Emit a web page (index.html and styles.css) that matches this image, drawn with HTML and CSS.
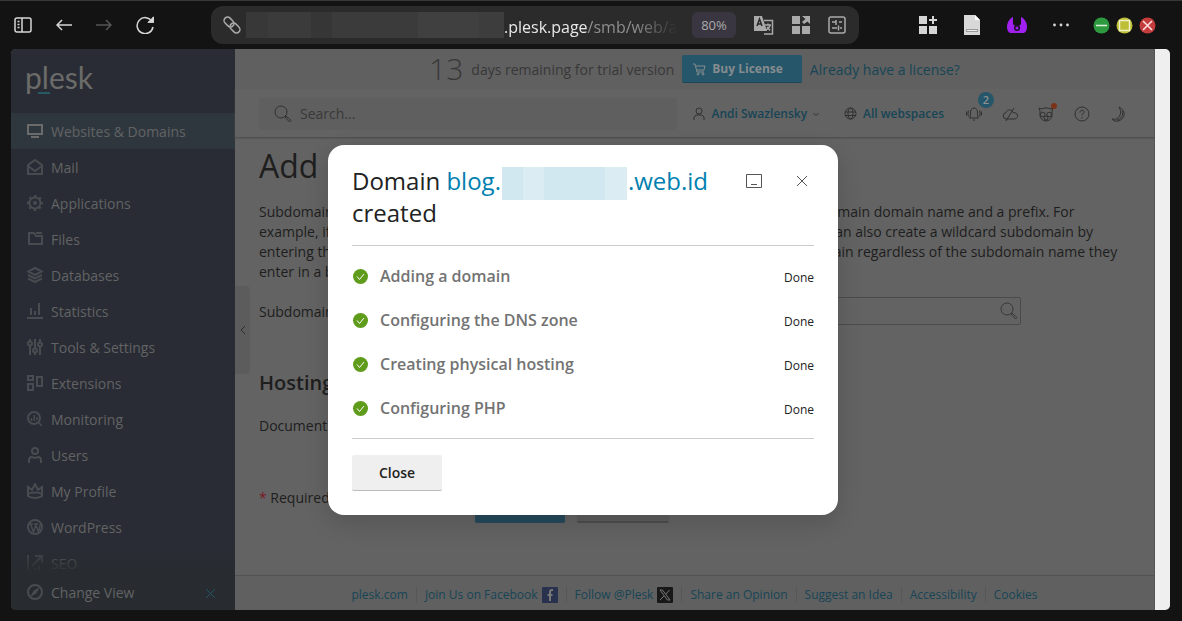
FILE: index.html
```
<!DOCTYPE html>
<html lang="en">

<head>
    <meta charset="UTF-8">
    <meta name="viewport" content="width=device-width, initial-scale=1.0">
    <title>Add a Subdomain - Plesk</title>
    <link rel="stylesheet" href="styles.css">
</head>
<body>
    <header class="toolbar">
        <div class="toolbar-nav">
            <button class="tool" aria-label="Sidebar">
                <svg width="18" height="18" viewBox="0 0 18 18"><rect x="1" y="2" width="16" height="14" rx="2"/><path d="M8 2v14M3.500 5.500h2M3.500 8.500h2M3.500 11.500h2"/></svg>
            </button>
            <button class="tool" aria-label="Back">
                <svg width="16" height="16" viewBox="0 0 16 16"><path d="M16 8H1M6 3L1 8l5 5"/></svg>
            </button>
            <button class="tool dim" aria-label="Forward">
                <svg width="16" height="16" viewBox="0 0 16 16"><path d="M0 8h15M10 3l5 5-5 5"/></svg>
            </button>
            <button class="tool" aria-label="Reload">
                <svg width="18" height="18" viewBox="0 0 18 18"><path d="M16 5.500A8 8 0 1 0 17 11M17.300 1v5h-5"/><path d="M17 2v4h-4z" fill="currentColor"/></svg>
            </button>
        </div>
        <div class="address">
            <svg class="link-icon" width="18" height="18" viewBox="0 0 18 18"><rect x="0.500" y="2.500" width="11" height="7" rx="3.500" transform="rotate(45 6 6)"/><rect x="6.500" y="8.500" width="11" height="7" rx="3.500" transform="rotate(45 12 12)"/></svg>
            <div class="url"><span class="url-mask"></span><b>.plesk.page</b>/smb/web/ad</div>
            <button class="zoom">80%</button>
            <button class="tool" aria-label="Translate">
                <svg width="20" height="20" viewBox="0 0 20 20"><path d="M10 5.500h8.500v13.500H10M11 10h6M14 8.500V10M16 10c-.5 3-2 4-4 5M13 12l3 3.500"/><path d="M0 1h8l5 15H0z" fill="currentColor" stroke="none"/><path d="M3 11l2.500-7L8 11M4 9h3" stroke="#2b2b2b"/></svg>
            </button>
            <button class="tool" aria-label="Apps">
                <svg class="solid" width="18" height="18" viewBox="0 0 18 18"><path d="M0 0h8v8H0zM0 10h8v8H0zM10 10h8v8h-8zM10 0h8v8l-2.500-2.500L12 8l-2-2 3.500-3z"/></svg>
            </button>
            <button class="tool" aria-label="Page settings">
                <svg width="18" height="18" viewBox="0 0 18 18"><rect x="1" y="1" width="16" height="16" rx="2"/><path d="M4 6h4M11 6h3M8 4v5M4 12h5M12 12h2M10.500 9.500v5"/></svg>
            </button>
        </div>
        <div class="toolbar-side">
            <div class="extensions">
                <button class="tool" aria-label="Extensions">
                    <svg class="solid" width="18" height="18" viewBox="0 0 18 18"><path d="M0 0h8v8H0zM0 10h8v8H0zM10 10h8v8h-8zM13 0h2v3h3v2h-3v3h-2V5h-3V3h3z"/></svg>
                </button>
                <button class="tool" aria-label="Document">
                    <svg class="solid" width="18" height="20" viewBox="0 0 18 20"><path d="M1 0h11l5 5v15H1z" fill="#d8d8d8"/><path d="M12 0l5 5h-5z" fill="#fff"/><path d="M3 14h12v3H3z" fill="#999"/><path d="M4 15h10v1H4z" fill="#eee"/></svg>
                </button>
                <button class="tool" aria-label="Reader">
                    <svg class="solid" width="20" height="18" viewBox="0 0 20 18"><path d="M6 1v7l2 2a3 3 0 0 1 4 0l2-2V1c4 2 6 6 6 10 0 3-1 5-3 6H3c-2-1-3-3-3-6C0 7 2 3 6 1z" fill="#a020f0"/><circle cx="10" cy="12" r="3" fill="#17101d"/><circle cx="10" cy="12" r="1.500" fill="#a020f0"/></svg>
                </button>
                <button class="tool" aria-label="More">
                    <svg class="solid" width="16" height="16" viewBox="0 0 16 16"><circle cx="1.500" cy="8" r="1.400"/><circle cx="8" cy="8" r="1.400"/><circle cx="14.500" cy="8" r="1.400"/></svg>
                </button>
            </div>
            <div class="window-buttons">
                <button class="tool" aria-label="Minimize">
                    <svg width="17" height="17" viewBox="0 0 17 17"><circle cx="8.500" cy="8.500" r="8" fill="#2e9a40" stroke="none"/><path d="M3 8.500h11" stroke="#dff0d8"/></svg>
                </button>
                <button class="tool" aria-label="Maximize">
                    <svg width="17" height="17" viewBox="0 0 17 17"><circle cx="8.500" cy="8.500" r="8" fill="#bfbf36" stroke="none"/><rect x="3.500" y="3.500" width="10" height="10" stroke="#f0f0c8"/></svg>
                </button>
                <button class="tool" aria-label="Close window">
                    <svg width="17" height="17" viewBox="0 0 17 17"><circle cx="8.500" cy="8.500" r="8" fill="#c43c3c" stroke="none"/><path d="M4 4l9 9M13 4l-9 9" stroke="#ffe0e0"/></svg>
                </button>
            </div>
        </div>
    </header>

    <div class="viewport">
        <aside class="sidebar">
            <a class="logo" href="#" aria-label="plesk">plesk</a>
            <nav class="menu">
                <a class="current" href="#"><svg width="16" height="16" viewBox="0 0 16 16"><path d="M1 2h14v9H1zM4 14h8"/></svg>Websites &amp; Domains</a>
                <a href="#"><svg width="16" height="16" viewBox="0 0 16 16"><path d="M1 6l7-5 7 5v9H1zM1 7l7 5 7-5"/></svg>Mail</a>
                <a href="#"><svg width="16" height="16" viewBox="0 0 16 16"><circle cx="8" cy="8" r="5.500"/><circle cx="8" cy="8" r="7" stroke-dasharray="2.500 3" stroke-dashoffset="1.250"/><circle cx="8" cy="8" r="1"/></svg>Applications</a>
                <a href="#"><svg width="16" height="16" viewBox="0 0 16 16"><path d="M2 2h5l2 3h6v8H2zM9 2h6"/></svg>Files</a>
                <a href="#"><svg width="16" height="16" viewBox="0 0 16 16"><path d="M8 1l7 3.500L8 8 1 4.500zM1 8l7 3.500L15 8M1 11.500L8 15l7-3.500"/></svg>Databases</a>
                <a href="#"><svg width="16" height="16" viewBox="0 0 16 16"><path d="M0 15h16M4 12V5M8 12V8M12 12V0"/></svg>Statistics</a>
                <a href="#"><svg width="16" height="16" viewBox="0 0 16 16"><path d="M3 0v2M3 7v9M8 0v9M8 14v2M13 0v3M13 8v8"/><circle cx="3" cy="4.500" r="2"/><circle cx="8" cy="11.500" r="2"/><circle cx="13" cy="5.500" r="2"/></svg>Tools &amp; Settings</a>
                <a href="#"><svg width="16" height="16" viewBox="0 0 16 16"><path d="M1 1h5v4H1zM1 9h5v6H1zM10 2h5v9h-5z"/></svg>Extensions</a>
                <a href="#"><svg width="16" height="16" viewBox="0 0 16 16"><circle cx="7" cy="7" r="6"/><path d="M11 11l4 4M4.500 10V7M7.300 10V4M10 9V6" stroke-width="1.500"/></svg>Monitoring</a>
                <a href="#"><svg width="16" height="16" viewBox="0 0 16 16"><circle cx="8" cy="4" r="3"/><path d="M2 16v-3c0-2 1-3 3-3l3 1 3-1c2 0 3 1 3 3v3"/></svg>Users</a>
                <a href="#"><svg width="16" height="16" viewBox="0 0 16 16"><path d="M1 4l4 3 3-6 3 6 4-3v9c-3 2.500-11 2.500-14 0zM1 11c3-2 11-2 14 0"/></svg>My Profile</a>
                <a href="#"><svg width="16" height="16" viewBox="0 0 16 16"><circle cx="8" cy="8" r="7"/><path d="M2 5h4M3.500 5l3 8L8.500 7M7 5h4M8.500 5l3 8 2-8" stroke-width="1.500"/></svg>WordPress</a>
                <a href="#"><svg width="16" height="16" viewBox="0 0 16 16"><path d="M1 0v15h3M8 1h7v7M15 1L5 11M8 15v-2M12 15v-4"/></svg>SEO</a>
            </nav>
            <div class="change-view">
                <svg width="16" height="16" viewBox="0 0 16 16"><circle cx="8" cy="8" r="7"/><path d="M12 4l-3 5-5 3 3-5z" fill="currentColor" stroke-width="1"/></svg>
                <a href="#">Change View</a>
                <button class="change-close" aria-label="Dismiss"><svg width="11" height="11" viewBox="0 0 11 11"><path d="M1 1l9 9M10 1l-9 9"/></svg></button>
            </div>
        </aside>

        <div class="content">
            <button class="collapse" aria-label="Collapse menu"><svg width="6" height="10" viewBox="0 0 6 10"><path d="M5 1L1 5l4 4"/></svg></button>

            <div class="trial">
                <span class="trial-days">13</span>
                <span class="trial-text">days remaining for trial version</span>
                <button class="buy"><svg width="13" height="13" viewBox="0 0 13 13"><path d="M0 1h2l2 8h7M3 3h9l-1 4H4"/><circle cx="5" cy="11" r="1"/><circle cx="10" cy="11" r="1"/></svg>Buy License</button>
                <a href="#">Already have a license?</a>
            </div>

            <div class="topbar">
                <label class="search">
                    <svg width="18" height="18" viewBox="0 0 18 18"><circle cx="7" cy="7" r="6"/><path d="M11 12l1-1 5 4.500-1.500 1.500z"/></svg>
                    <input type="text" placeholder="Search..." aria-label="Search">
                </label>
                <a class="account" href="#">
                    <svg width="12" height="14" viewBox="0 0 12 14"><circle cx="6" cy="4" r="3"/><path d="M1 13v-3l2-2h6l2 2v3"/></svg>
                    Andi Swazlensky
                    <svg width="6" height="6" viewBox="0 0 6 6"><path d="M.5 2L3 4.500 5.500 2"/></svg>
                </a>
                <a class="webspaces" href="#">
                    <svg width="13" height="13" viewBox="0 0 13 13"><circle cx="6.500" cy="6.500" r="5.500"/><ellipse cx="6.500" cy="6.500" rx="2.500" ry="5.500"/><path d="M1 5h11M1 8.500h11"/></svg>
                    All webspaces
                </a>
                <div class="top-icons">
                    <button class="top-icon" aria-label="Notifications">
                        <svg width="16" height="16" viewBox="0 0 16 16"><path d="M3.500 12c1-1 1-2 1-6 0-2 1.500-4 3.500-4s3.500 2 3.500 4c0 4 0 5 1 6zM7 14h2M2.500 4.500c-.7 2-.7 4 0 6M13.500 4.500c.7 2 .7 4 0 6M.5 5.500v4M15.500 5.500v4"/></svg>
                        <span class="badge">2</span>
                    </button>
                    <button class="top-icon" aria-label="Cloud">
                        <svg width="16" height="16" viewBox="0 0 16 16"><path d="M4 13a3.300 3.300 0 0 1 0-6.500C5 3 10 3 11 6.500c6 0 6 6.500 1 6.500zM12 2L4 15"/></svg>
                    </button>
                    <button class="top-icon" aria-label="Advisor">
                        <svg width="16" height="16" viewBox="0 0 16 16"><path d="M2 5L1 2l3 1c2-1.500 6-1.500 8 0l3-1-1 3v5c-1 3-3 5-6 5s-5-2-6-5z"/><circle cx="4.800" cy="8.500" r="2.300"/><circle cx="11.200" cy="8.500" r="2.300"/><circle cx="8" cy="12" r="2"/></svg>
                        <span class="dot"></span>
                    </button>
                    <button class="top-icon" aria-label="Help">
                        <svg width="16" height="16" viewBox="0 0 16 16"><circle cx="8" cy="8" r="7"/><path d="M6 6.500c0-3 4-3 4-.5 0 1.500-2 1.500-2 3.500M8 11v1.500"/></svg>
                    </button>
                    <button class="top-icon" aria-label="Dark mode">
                        <svg width="16" height="16" viewBox="0 0 16 16"><path d="M9 1c7 3 7 12-1 14-3 .5-5-.5-6-2 7 2 11-6 7-12zM12 5c2 4-1 8-5 9"/></svg>
                    </button>
                </div>
            </div>

            <main class="page">
                <h1>Add a Subdomain</h1>
                <p class="intro">
                    Subdomains are internet addresses for different sections of your website. They use your main domain name and a prefix. For<br>
                    example, if your domain is domain.com, a subdomain might be store.domain.com. You can also create a wildcard subdomain by<br>
                    entering the asterisk symbol ('*'). All website visitors will be redirected to your main domain regardless of the subdomain name they<br>
                    enter in a browser.
                </p>
                <form>
                    <div class="row">
                        <label for="subdomain">Subdomain name</label>
                        <span class="field wide">
                            <input id="subdomain" type="text">
                            <svg width="18" height="18" viewBox="0 0 18 18"><circle cx="7" cy="7" r="6"/><path d="M11 12l1-1 5 4.500-1.500 1.500z"/></svg>
                        </span>
                    </div>
                    <h2>Hosting Settings</h2>
                    <div class="row">
                        <label for="root">Document root</label>
                        <span class="field"><input id="root" type="text"></span>
                    </div>
                    <div class="row actions">
                        <span class="required"><i>*</i> Required fields</span>
                        <button class="ok" type="button">OK</button>
                        <button class="cancel" type="button">Cancel</button>
                    </div>
                </form>
            </main>

            <footer class="footer">
                <a href="#">plesk.com</a>
                <a href="#">Join Us on Facebook <svg width="16" height="16" viewBox="0 0 16 16"><rect width="16" height="16" rx="1" fill="#28324e" stroke="none"/><path d="M11 3h-1C8.500 3 8 4 8 5v9M5.500 8h5" stroke="#777" stroke-width="2"/></svg></a>
                <a href="#">Follow @Plesk <svg width="16" height="16" viewBox="0 0 16 16"><rect width="16" height="16" rx="1" fill="#181818" stroke="none"/><path d="M3 3h2.500l7.500 10h-2.500zM12.500 3L9 7M7 9l-4 4" stroke="#777"/></svg></a>
                <a href="#">Share an Opinion</a>
                <a href="#">Suggest an Idea</a>
                <a href="#">Accessibility</a>
                <a href="#">Cookies</a>
            </footer>
        </div>

        <div class="scrollbar"></div>

        <div class="overlay">
            <section class="dialog" role="dialog" aria-labelledby="dialog-title">
                <div class="dialog-head">
                    <h3 id="dialog-title">Domain <a href="#">blog.<span class="name-mask"></span>.web.id</a> created</h3>
                    <button class="dialog-tool" aria-label="Minimize dialog"><svg width="16" height="14" viewBox="0 0 16 14"><path d="M.5.5h15v13H.5zM5 10.500h6"/></svg></button>
                    <button class="dialog-tool" aria-label="Close dialog"><svg width="12" height="12" viewBox="0 0 12 12"><path d="M1 1l10 10M11 1L1 11"/></svg></button>
                </div>
                <ul class="tasks">
                    <li><svg width="16" height="16" viewBox="0 0 16 16"><circle cx="8.500" cy="8.500" r="7.500"/><path d="M5 8.500l2.500 3L12 6"/></svg><span>Adding a domain</span><small>Done</small></li>
                    <li><svg width="16" height="16" viewBox="0 0 16 16"><circle cx="8.500" cy="8.500" r="7.500"/><path d="M5 8.500l2.500 3L12 6"/></svg><span>Configuring the DNS zone</span><small>Done</small></li>
                    <li><svg width="16" height="16" viewBox="0 0 16 16"><circle cx="8.500" cy="8.500" r="7.500"/><path d="M5 8.500l2.500 3L12 6"/></svg><span>Creating physical hosting</span><small>Done</small></li>
                    <li><svg width="16" height="16" viewBox="0 0 16 16"><circle cx="8.500" cy="8.500" r="7.500"/><path d="M5 8.500l2.500 3L12 6"/></svg><span>Configuring PHP</span><small>Done</small></li>
                </ul>
                <button class="close">Close</button>
            </section>
        </div>
    </div>
</body>
</html>
```
FILE: styles.css
```
* {
    box-sizing: border-box;
}

body {
    margin: 0;
    min-height: 100vh;
    display: flex;
    flex-direction: column;
    padding: 0 12px 11px 11px;
    background-color: #131313;
    border-top: 1px solid #383838;
    font: 14px/20px "Open Sans", "Noto Sans", sans-serif;
    color: #1e1e1e;
}

a {
    color: #174556;
    text-decoration: none;
}

button {
    font: inherit;
    color: inherit;
    padding: 0;
    border: none;
    background: none;
    cursor: pointer;
}

input {
    font: inherit;
    color: inherit;
    min-width: 0;
    border: none;
    background: none;
    outline: none;
}

svg {
    flex: none;
    fill: none;
    stroke: currentColor;
}

.solid {
    fill: currentColor;
    stroke: none;
}

/* Browser toolbar */
.toolbar {
    height: 48px;
    display: flex;
    align-items: center;
    color: #d6d6d6;
}

.tool {
    display: flex;
}

.tool svg:not(.solid),
.link-icon {
    stroke-width: 1.5;
}

.dim {
    color: #555;
}

.toolbar-nav {
    width: 200px;
    display: flex;
    align-items: center;
    gap: 24px;
    padding-left: 3px;
}

.address {
    flex: 1;
    min-width: 0;
    height: 38px;
    display: flex;
    align-items: center;
    gap: 18px;
    padding: 0 13px 0 12px;
    border-radius: 12px;
    background-color: #2b2b2b;
    color: #aaa;
}

.url {
    flex: 1;
    min-width: 0;
    display: flex;
    align-items: flex-end;
    height: 26px;
    margin: 0 -4px 0 -13px;
    overflow: hidden;
    font-size: 16px;
    line-height: 22px;
    color: #8e8e8e;
    mask-image: linear-gradient(to right, #000 90%, transparent);
}

.url b {
    font-weight: 400;
    color: #e8e8e8;
}

.url-mask {
    flex: none;
    width: 258px;
    height: 26px;
    background: linear-gradient(to right, #383838 0 22px, #3b3b3b 22px 65px, #363636 65px 86px, #3b3b3b 86px 172px, #404040 172px 233px, #3d3d3d 233px);
}

.zoom {
    width: 44px;
    height: 26px;
    border-radius: 6px;
    background-color: #393641;
    font-size: 13px;
}

.toolbar-side {
    width: 311px;
    display: flex;
    align-items: center;
    justify-content: space-between;
    padding: 0 14px 0 60px;
}

.extensions {
    display: flex;
    align-items: center;
    gap: 26px;
}

.window-buttons {
    display: flex;
    gap: 6px;
}

/* Page area */
.viewport {
    position: relative;
    flex: 1;
    display: flex;
    overflow: hidden;
    border-radius: 5px;
    background-color: #636363;
}

.scrollbar {
    width: 15px;
    background-color: #efefef;
}

.sidebar {
    position: relative;
    width: 224px;
    height: 561px;
    min-height: 100%;
    flex: none;
    overflow: hidden;
    background-color: #292c34;
    color: #626364;
}

.logo {
    display: block;
    height: 64px;
    padding: 11px 14px;
    font: 400 30px/34px Lato, sans-serif;
    color: #6b6b6a;
}

.logo::after {
    content: "";
    display: block;
    width: 12px;
    height: 2px;
    margin: -2px 0 0 13px;
    background-color: #265a64;
}

.menu a {
    height: 36px;
    display: flex;
    align-items: center;
    gap: 8px;
    padding: 2px 16px 0;
    color: #626364;
}

.menu svg,
.change-view svg {
    color: #484b50;
    stroke-width: 2;
}

.menu svg {
    margin-bottom: 2px;
}

.menu .current {
    background-color: #2f373e;
}

.menu .current svg {
    color: #6b6b6b;
}

.change-view {
    position: absolute;
    left: 0;
    right: 0;
    bottom: 0;
    height: 64px;
    display: flex;
    align-items: flex-end;
    gap: 8px;
    padding: 0 19px 7px 16px;
    background: linear-gradient(to bottom, transparent, #282c30 28px);
}

.change-view a {
    flex: 1;
    color: #626364;
}

.change-view > svg {
    margin-bottom: 3px;
}

.change-close {
    display: flex;
    align-items: center;
    height: 20px;
}

.change-close svg {
    color: #245566;
    stroke-width: 1;
}

.content {
    position: relative;
    flex: 1;
    min-width: 0;
    display: flex;
    flex-direction: column;
    border-right: 1px solid #555;
}

.collapse {
    position: absolute;
    left: 0;
    top: 237px;
    width: 15px;
    height: 88px;
    border-radius: 0 4px 4px 0;
    background-color: #5c5c5c;
    color: #2b2b2b;
}

.trial {
    height: 40px;
    display: flex;
    align-items: center;
    justify-content: center;
    gap: 8px;
    background-color: #606060;
    color: #383838;
}

.trial-days {
    font-size: 30px;
    font-weight: 300;
}

.trial-text,
.trial a {
    padding-top: 2px;
}

.buy {
    height: 28px;
    display: flex;
    align-items: center;
    gap: 6px;
    padding: 1px 19px 0 11px;
    border-bottom: 1px solid #1c475a;
    border-radius: 2px;
    background-color: #25566a;
    color: #858c8f;
    font-size: 12px;
    font-weight: 700;
}

.topbar {
    height: 49px;
    display: flex;
    align-items: center;
    padding: 1px 28px 0 24px;
    border-bottom: 1px solid #505050;
    box-shadow: 0 1px 1px #5a5a5a;
    color: #303030;
    font-size: 12px;
    font-weight: 600;
}

.search {
    flex: 1;
    height: 32px;
    display: flex;
    align-items: center;
    gap: 8px;
    padding: 0 15px;
    border-radius: 3px;
    background-color: #5f5f5f;
}

.search input {
    flex: 1;
    padding: 0;
    font-size: 14px;
    font-weight: 400;
}

.search input::placeholder {
    color: #393939;
}

.account,
.webspaces {
    display: flex;
    align-items: center;
    gap: 6px;
}

.account {
    margin-left: 16px;
}

.webspaces {
    margin-left: 25px;
}

.topbar a svg {
    color: #303030;
}

.top-icons {
    display: flex;
    gap: 20px;
    margin-left: 22px;
}

.top-icon {
    position: relative;
    display: flex;
}

.badge {
    position: absolute;
    left: 12px;
    top: -14px;
    width: 16px;
    height: 16px;
    border-radius: 50%;
    background-color: #25566a;
    color: #8a8f91;
    font-size: 11px;
    line-height: 16px;
}

.dot {
    position: absolute;
    right: -3px;
    top: -3px;
    width: 6px;
    height: 6px;
    border-radius: 50%;
    background-color: #7c3218;
}

.page {
    padding: 8px 24px 0;
}

h1 {
    margin: 0 0 16px;
    font-size: 32px;
    line-height: 40px;
    font-weight: 400;
}

.intro {
    margin: 0 0 15px;
    white-space: nowrap;
}

h2 {
    margin: 44px 0 14px;
    font-size: 20px;
    line-height: 28px;
    font-weight: 600;
}

.row {
    display: flex;
    align-items: center;
}

.row label,
.required {
    width: 216px;
    flex: none;
    padding-top: 1px;
}

.field {
    width: 300px;
    height: 28px;
    display: flex;
    align-items: center;
    padding: 0 2px;
    border: 1px solid #4b4b4b;
    border-radius: 2px;
    color: #383838;
}

.field.wide {
    width: 546px;
}

.field input {
    flex: 1;
}

.actions {
    margin-top: 48px;
    align-items: flex-start;
    gap: 12px;
}

.required {
    width: 204px;
}

.required i {
    font-style: normal;
    color: #7a1a24;
}

.actions button {
    width: 90px;
    height: 36px;
    border-radius: 2px;
    font-weight: 600;
}

.ok {
    background-color: #25495a;
}

.actions .cancel {
    width: 92px;
    border-bottom: 2px solid #4c4c4c;
    background-color: #5c5c5c;
}

.footer {
    height: 35px;
    display: flex;
    align-items: center;
    justify-content: center;
    margin-top: auto;
    padding-top: 3px;
    border-top: 1px solid #525252;
    background-color: #606060;
    font-size: 12px;
    line-height: 16px;
}

.footer a {
    display: flex;
    align-items: center;
    gap: 4px;
    padding: 0 8px;
}

.footer a + a {
    border-left: 1px solid #575757;
}

/* Progress dialog */
.overlay {
    position: absolute;
    inset: 0 15px 0 0;
    display: flex;
    align-items: flex-start;
    justify-content: center;
    padding-top: 96px;
}

.dialog {
    width: 510px;
    padding: 20px 24px 24px;
    border-radius: 16px;
    background-color: #fff;
    box-shadow: 0 8px 24px rgba(0, 0, 0, 0.15);
    color: #222;
}

.dialog-head {
    display: flex;
    align-items: flex-start;
    padding-bottom: 16px;
    border-bottom: 1px solid #ccc;
}

.dialog h3 {
    flex: 1;
    margin: 0;
    font-size: 24px;
    line-height: 32px;
    font-weight: 400;
}

.dialog h3 a {
    color: #0080b0;
}

.name-mask {
    display: inline-block;
    width: 125px;
    height: 33px;
    margin: -8px 1px;
    vertical-align: middle;
    background: linear-gradient(to right, #d2e8f0 0 21px, #dbecf3 21px 42px, #d2e8f0 42px 103px, #dbecf3 103px);
}

.dialog-tool {
    width: 24px;
    height: 32px;
    display: flex;
    align-items: center;
    justify-content: center;
    color: #555;
}

.dialog-tool + .dialog-tool {
    margin-left: 24px;
}

.tasks {
    margin: 0 0 16px;
    padding: 8px 0;
    list-style: none;
    border-bottom: 1px solid #ccc;
}

.tasks li {
    height: 44px;
    display: flex;
    align-items: center;
    gap: 12px;
}

.tasks circle {
    fill: #5f9c1c;
    stroke: none;
}

.tasks path {
    stroke: #fff;
}

.tasks span {
    flex: 1;
    font-size: 16px;
    font-weight: 600;
    color: #737373;
}

.tasks small {
    padding-top: 3px;
    font-size: 12px;
}

.close {
    width: 90px;
    height: 36px;
    border-bottom: 1px solid #bbb;
    border-radius: 2px;
    background-color: #efefef;
    font-weight: 600;
}
```
